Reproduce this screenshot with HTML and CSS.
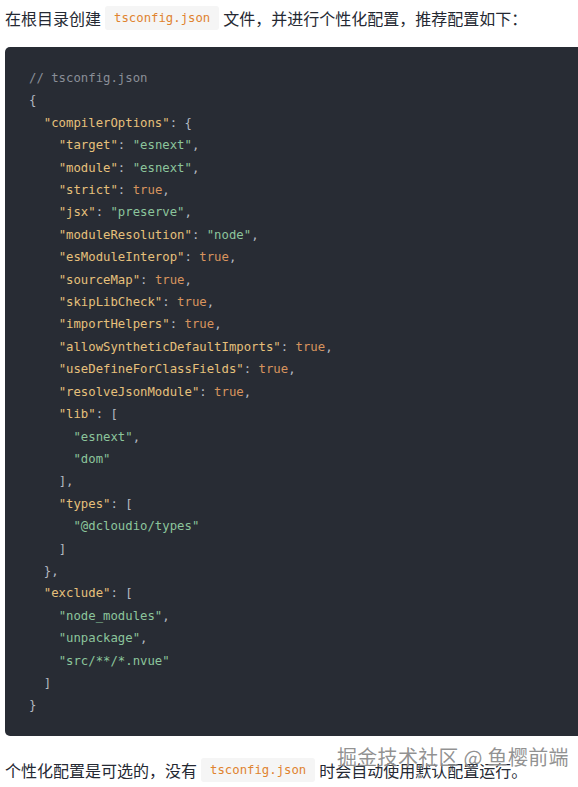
FILE: index.html
```html
<!DOCTYPE html>
<html lang="zh-CN">
<head>
<meta charset="utf-8">
<title>tsconfig</title>
<link rel="stylesheet" href="styles.css">
</head>
<body>
<div class="page">
  <p class="para">在根目录创建<code class="inline">tsconfig.json</code>文件，并进行个性化配置，推荐配置如下：</p>
  <pre class="block"><code><span class="c">// tsconfig.json</span>
<span class="p">{</span>
  <span class="k">"compilerOptions"</span><span class="p">: {</span>
    <span class="k">"target"</span><span class="p">: </span><span class="s">"esnext"</span><span class="p">,</span>
    <span class="k">"module"</span><span class="p">: </span><span class="s">"esnext"</span><span class="p">,</span>
    <span class="k">"strict"</span><span class="p">: </span><span class="b">true</span><span class="p">,</span>
    <span class="k">"jsx"</span><span class="p">: </span><span class="s">"preserve"</span><span class="p">,</span>
    <span class="k">"moduleResolution"</span><span class="p">: </span><span class="s">"node"</span><span class="p">,</span>
    <span class="k">"esModuleInterop"</span><span class="p">: </span><span class="b">true</span><span class="p">,</span>
    <span class="k">"sourceMap"</span><span class="p">: </span><span class="b">true</span><span class="p">,</span>
    <span class="k">"skipLibCheck"</span><span class="p">: </span><span class="b">true</span><span class="p">,</span>
    <span class="k">"importHelpers"</span><span class="p">: </span><span class="b">true</span><span class="p">,</span>
    <span class="k">"allowSyntheticDefaultImports"</span><span class="p">: </span><span class="b">true</span><span class="p">,</span>
    <span class="k">"useDefineForClassFields"</span><span class="p">: </span><span class="b">true</span><span class="p">,</span>
    <span class="k">"resolveJsonModule"</span><span class="p">: </span><span class="b">true</span><span class="p">,</span>
    <span class="k">"lib"</span><span class="p">: [</span>
      <span class="s">"esnext"</span><span class="p">,</span>
      <span class="s">"dom"</span>
    <span class="p">],</span>
    <span class="k">"types"</span><span class="p">: [</span>
      <span class="s">"@dcloudio/types"</span>
    <span class="p">]</span>
  <span class="p">},</span>
  <span class="k">"exclude"</span><span class="p">: [</span>
    <span class="s">"node_modules"</span><span class="p">,</span>
    <span class="s">"unpackage"</span><span class="p">,</span>
    <span class="s">"src/**/*.nvue"</span>
  <span class="p">]</span>
<span class="p">}</span></code></pre>
  <p class="para para-bottom">个性化配置是可选的，没有<code class="inline">tsconfig.json</code>时会自动使用默认配置运行。</p>
</div>
<div class="watermark">掘金技术社区 @ 鱼樱前端</div>
</body>
</html>
```

FILE: styles.css
```css
html, body {
  margin: 0;
  padding: 0;
  overflow: hidden;
  background: #ffffff;
}

body {
  position: relative;
  min-height: 787px;
  font-family: "Noto Sans CJK SC", "Noto Sans", sans-serif;
  color: #252933;
}

.page {
  width: 640px;
  padding: 6px 0 0 5px;
}

.para {
  margin: 0;
  font-size: 16px;
  line-height: 24px;
}

.para-bottom {
  margin-top: 22px;
}

.inline {
  display: inline-block;
  margin: 0 4px;
  padding: 0 9px;
  height: 24px;
  line-height: 24px;
  vertical-align: top;
  background: #f5f5f5;
  border-radius: 3px;
  color: #e0832f;
  font-family: "DejaVu Sans Mono", "Liberation Mono", monospace;
  font-size: 12.3px;
}

.block {
  margin: 17px 0 0 0;
  padding: 20px 24px 19px 24px;
  background: #282c34;
  border-radius: 5px;
  font-family: "DejaVu Sans Mono", "Liberation Mono", monospace;
  font-size: 12.3px;
  line-height: 22.4px;
  color: #abb2bf;
  white-space: pre;
}

.block code {
  font-family: inherit;
}

.c { color: #8a8f98; }
.p { color: #b4b9c2; }
.k { color: #e6c07b; }
.s { color: #8cc59c; }
.b { color: #d8945e; }

.watermark {
  position: absolute;
  left: 337px;
  top: 744px;
  font-family: "Noto Sans CJK SC", sans-serif;
  font-size: 20px;
  line-height: 26px;
  color: rgba(110, 110, 110, 0.75);
  text-shadow: 0 0 1px rgba(255, 255, 255, 0.9);
  white-space: nowrap;
  letter-spacing: 0.3px;
}
```
